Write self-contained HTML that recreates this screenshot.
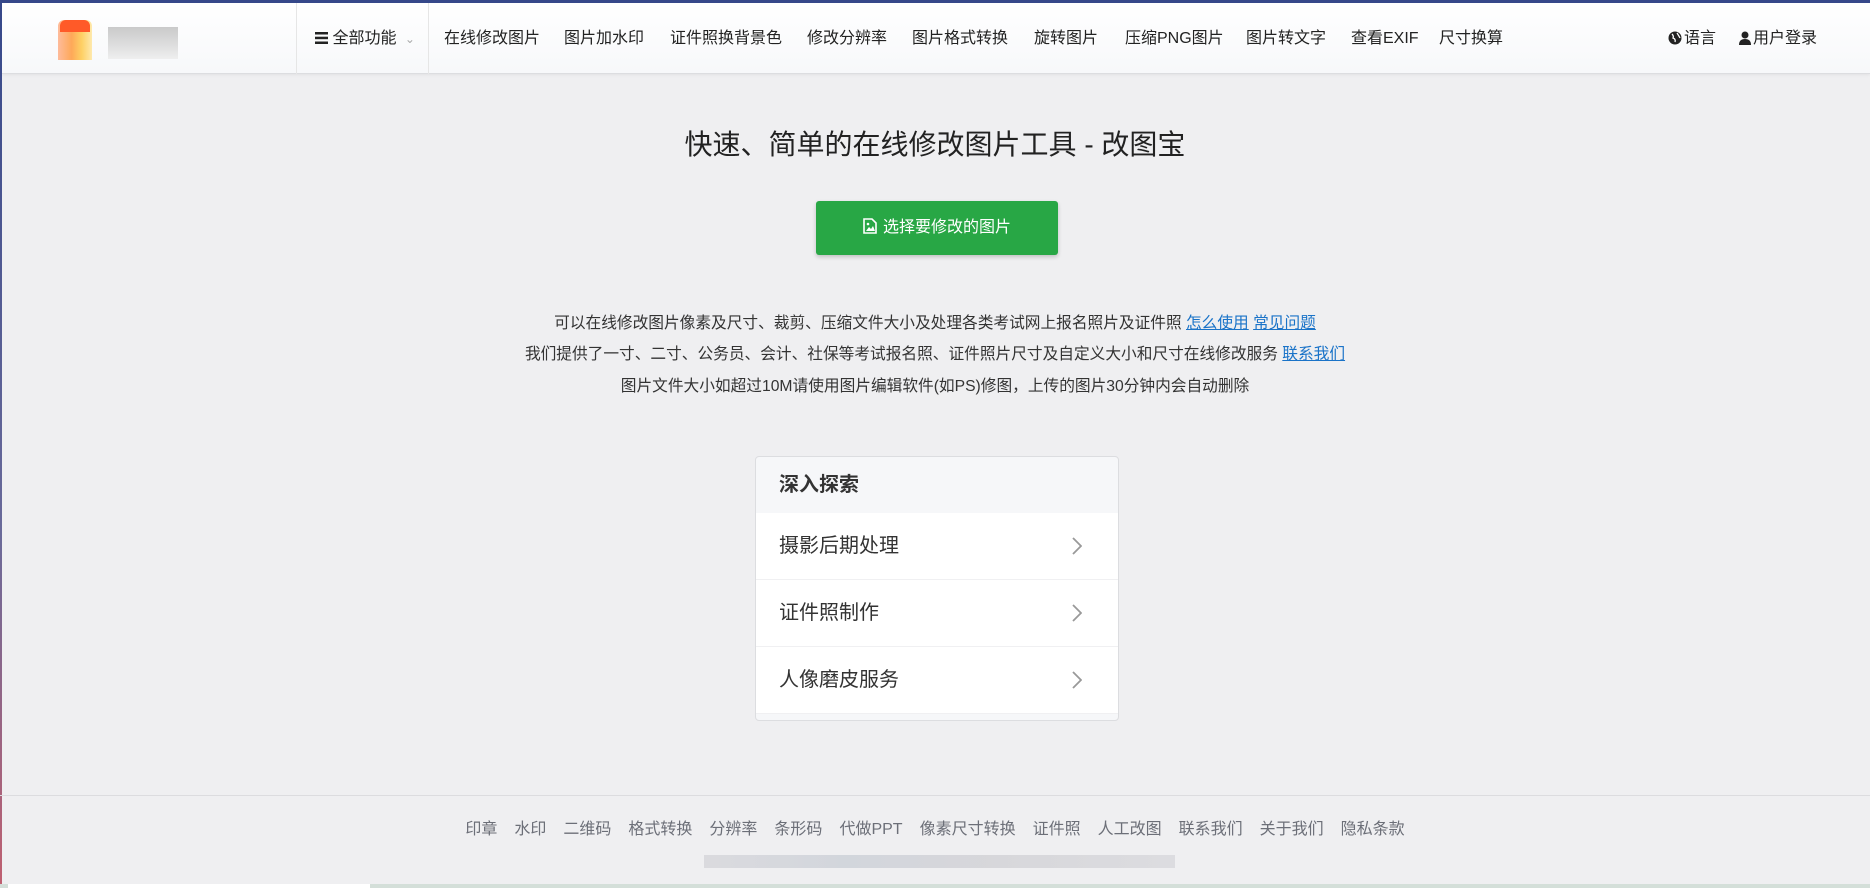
<!DOCTYPE html>
<html><head><meta charset="utf-8"><style>
*{margin:0;padding:0;box-sizing:border-box}
body{width:1870px;height:888px;overflow:hidden;background:#efeff1;font-family:"Liberation Sans","Noto Sans CJK SC",sans-serif;color:#212529;position:relative}
.topb{position:absolute;left:0;top:0;width:1870px;height:3px;background:#36488a}
.leftb{position:absolute;left:0;top:0;width:2px;height:888px;background:linear-gradient(#36488a,#6a6a9a 60%,#c06070)}
.hdr{position:absolute;left:2px;top:3px;width:1868px;height:71px;background:linear-gradient(#fff,#f7f8fa);border-bottom:1px solid #dcdde0;box-shadow:0 1px 3px rgba(0,0,0,.06)}
.nav{position:absolute;top:0;height:71px;line-height:71px;font-size:16px;color:#222;white-space:nowrap}
.div{position:absolute;top:0;width:1px;height:71px;background:#e6e6e6}
.title{position:absolute;left:0;width:1870px;top:123px;text-align:center;font-size:28px;color:#222}
.btn{position:absolute;left:816px;top:201px;width:242px;height:54px;background:#28a745;border-radius:3px;box-shadow:0 2px 4px rgba(0,0,0,.2);color:#fff;font-size:16px;line-height:54px;text-align:center}
.txt{position:absolute;left:0;width:1870px;text-align:center;font-size:15.7px;color:#333}
.txt a{color:#1a73c8;text-decoration:underline}
.card{position:absolute;left:755px;top:456px;width:364px;height:265px;background:#f6f7f9;border:1px solid #dcdde0;border-radius:4px;overflow:hidden}
.ch{height:56px;line-height:56px;padding-left:23px;font-size:20px;font-weight:bold;color:#333}
.row{height:67px;line-height:67px;background:#fff;padding-left:23px;font-size:20px;color:#333;border-bottom:1px solid #f0f0f2;position:relative}
.row svg{position:absolute;right:36px;top:24px}
.fl{position:absolute;left:0;top:795px;width:1870px;height:1px;background:#dcdcdf}
.foot{position:absolute;left:0;top:815px;width:1870px;text-align:center;font-size:16px;color:#6c6f78}
.foot span{margin:0 8.5px}
</style></head><body>
<div class="hdr">
 <div style="position:absolute;left:56px;top:17px;width:34px;height:40px;background:linear-gradient(90deg,#ffb08a,#ff9a3c 40%,#ffc94a 70%,#ffe6a0);border-radius:6px 6px 0 0;opacity:.85"></div>
 <div style="position:absolute;left:58px;top:17px;width:30px;height:12px;background:#ff5a28;border-radius:6px 6px 0 0"></div>
 <div style="position:absolute;left:106px;top:24px;width:70px;height:32px;background:linear-gradient(#bdbdbd,#d8d8d8 60%,#ececec);opacity:.8"></div>
 <div class="div" style="left:294px"></div><div class="div" style="left:426px"></div>
 <div class="nav" style="left:313px"><svg width="13" height="12" style="vertical-align:-1px"><rect y="0" width="13" height="2.5" fill="#222"/><rect y="4.7" width="13" height="2.5" fill="#222"/><rect y="9.5" width="13" height="2.5" fill="#222"/></svg> 全部功能 <span style="color:#aaa;font-size:12px;margin-left:4px">&#8964;</span></div>
 <div class="nav" style="left:442px">在线修改图片</div>
 <div class="nav" style="left:562px">图片加水印</div>
 <div class="nav" style="left:668px">证件照换背景色</div>
 <div class="nav" style="left:805px">修改分辨率</div>
 <div class="nav" style="left:910px">图片格式转换</div>
 <div class="nav" style="left:1032px">旋转图片</div>
 <div class="nav" style="left:1123px">压缩PNG图片</div>
 <div class="nav" style="left:1244px">图片转文字</div>
 <div class="nav" style="left:1349px">查看EXIF</div>
 <div class="nav" style="left:1437px">尺寸换算</div>
 <div class="nav" style="left:1666px"><svg width="14" height="14" style="vertical-align:-2px;margin-right:2px"><circle cx="7" cy="7" r="6.5" fill="#222"/><path d="M4 3 Q6 5 5 7 Q8 8 7 11 M9 2 Q11 5 12 7" stroke="#fff" stroke-width="1.3" fill="none"/></svg>语言</div>
 <div class="nav" style="left:1737px"><svg width="12" height="14" style="vertical-align:-2px;margin-right:2px"><circle cx="6" cy="4" r="3.5" fill="#222"/><path d="M0 14 Q0 8 6 8 Q12 8 12 14Z" fill="#222"/></svg>用户登录</div>
</div>
<div class="topb"></div><div class="leftb"></div>
<div class="title">快速、简单的在线修改图片工具 - 改图宝</div>
<div class="btn"><svg width="14" height="16" style="vertical-align:-2px;margin-right:6px"><path d="M1 1h8l4 4v10H1z" fill="none" stroke="#fff" stroke-width="1.6"/><path d="M3 13l3-4 2 2 2-3 2 5z" fill="#fff"/><circle cx="5" cy="6" r="1.3" fill="#fff"/></svg>选择要修改的图片</div>
<div class="txt" style="top:310px">可以在线修改图片像素及尺寸、裁剪、压缩文件大小及处理各类考试网上报名照片及证件照 <a>怎么使用</a> <a>常见问题</a></div>
<div class="txt" style="top:341px">我们提供了一寸、二寸、公务员、会计、社保等考试报名照、证件照片尺寸及自定义大小和尺寸在线修改服务 <a>联系我们</a></div>
<div class="txt" style="top:373px">图片文件大小如超过10M请使用图片编辑软件(如PS)修图，上传的图片30分钟内会自动删除</div>
<div class="card">
 <div class="ch">深入探索</div>
 <div class="row">摄影后期处理<svg width="10" height="18"><path d="M1 1l8 8-8 8" stroke="#999" stroke-width="1.8" fill="none"/></svg></div>
 <div class="row">证件照制作<svg width="10" height="18"><path d="M1 1l8 8-8 8" stroke="#999" stroke-width="1.8" fill="none"/></svg></div>
 <div class="row">人像磨皮服务<svg width="10" height="18"><path d="M1 1l8 8-8 8" stroke="#999" stroke-width="1.8" fill="none"/></svg></div>
</div>
<div class="fl"></div>
<div class="foot"><span>印章</span><span>水印</span><span>二维码</span><span>格式转换</span><span>分辨率</span><span>条形码</span><span>代做PPT</span><span>像素尺寸转换</span><span>证件照</span><span>人工改图</span><span>联系我们</span><span>关于我们</span><span>隐私条款</span></div>
<div style="position:absolute;left:704px;top:855px;width:471px;height:13px;background:linear-gradient(90deg,#d8d8dc,#cfd3da 30%,#d4d4d8 60%,#dadade);opacity:.9"></div>
<div style="position:absolute;left:0;top:884px;width:1870px;height:4px;background:#d4dfd9"></div>
<div style="position:absolute;left:8px;top:884px;width:362px;height:4px;background:#fff"></div>
</body></html>
